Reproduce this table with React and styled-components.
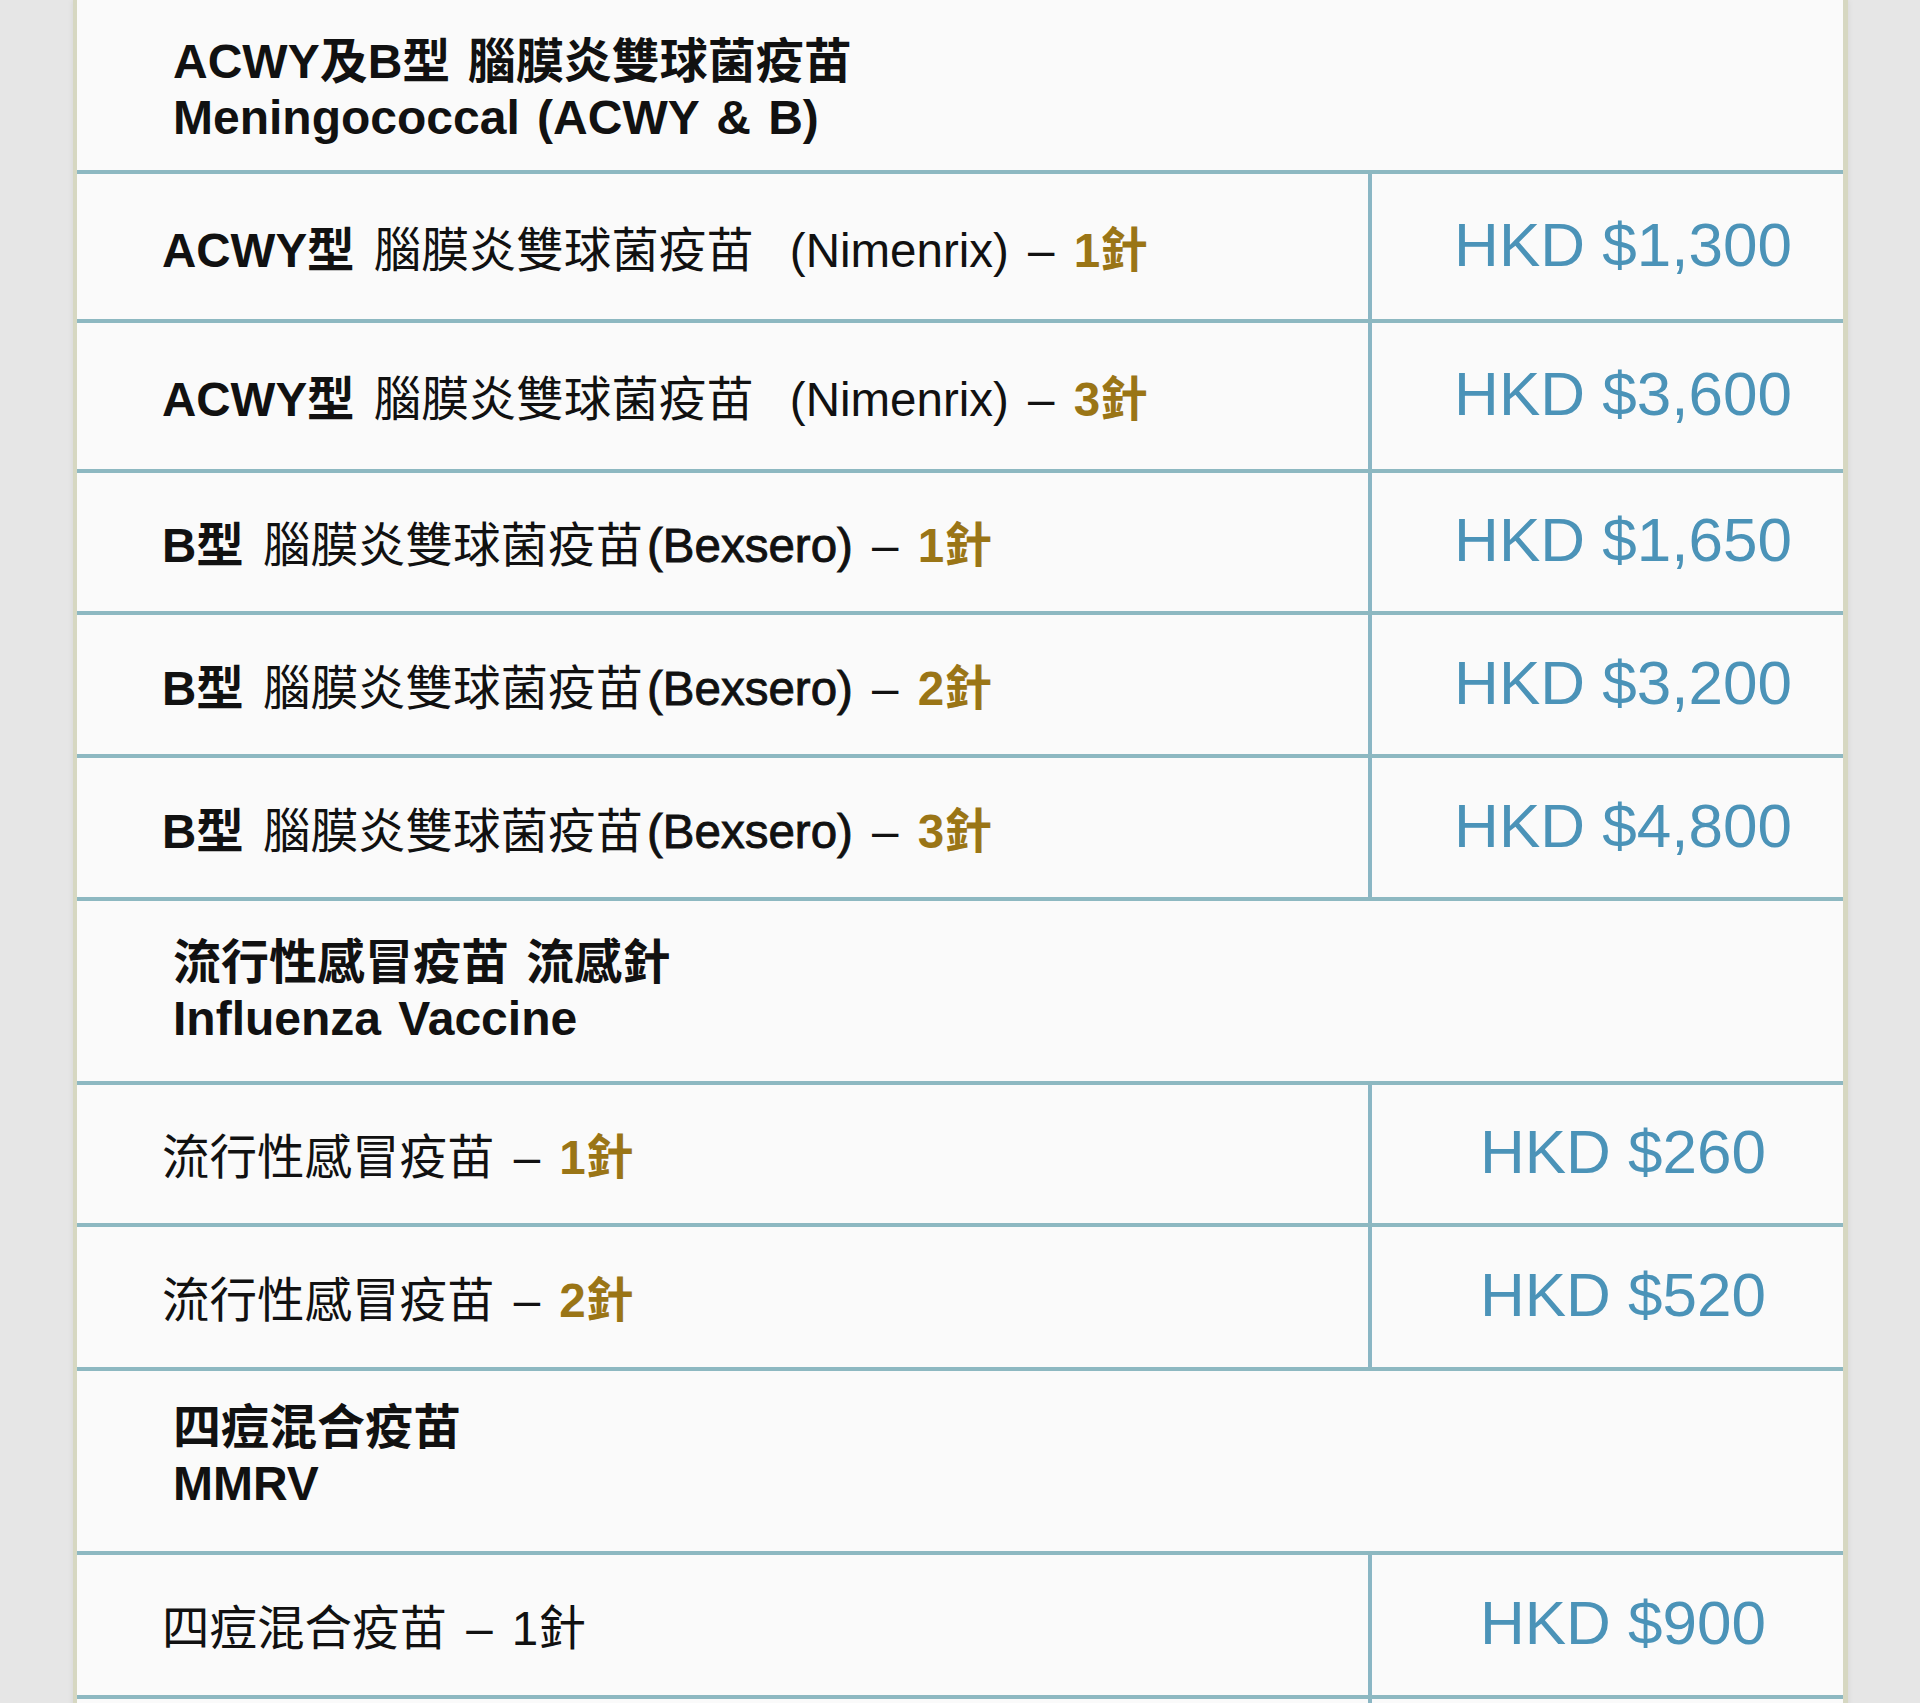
import styled, { createGlobalStyle } from "styled-components";

const GlobalStyle = createGlobalStyle`
  html, body {
    margin: 0;
    padding: 0;
    background: #e6e6e6;
  }
  body {
    font-family: "Liberation Sans", "Noto Sans CJK TC", sans-serif;
    color: #111;
  }
  * {
    box-sizing: border-box;
  }
`;

const sections = [
  {
    zh: "ACWY及B型 腦膜炎雙球菌疫苗",
    en: "Meningococcal (ACWY & B)",
    h: 174,
    pt: 34,
    items: [
      { strong: "ACWY型", text: " 腦膜炎雙球菌疫苗", brand: "(Nimenrix)", gap: 36, dose: "1針", price: "HKD $1,300", h: 149 },
      { strong: "ACWY型", text: " 腦膜炎雙球菌疫苗", brand: "(Nimenrix)", gap: 36, dose: "3針", price: "HKD $3,600", h: 150 },
      { strong: "B型", text: " 腦膜炎雙球菌疫苗", brand: "(Bexsero)", heavy: true, dose: "1針", price: "HKD $1,650", h: 142 },
      { strong: "B型", text: " 腦膜炎雙球菌疫苗", brand: "(Bexsero)", heavy: true, dose: "2針", price: "HKD $3,200", h: 143 },
      { strong: "B型", text: " 腦膜炎雙球菌疫苗", brand: "(Bexsero)", heavy: true, dose: "3針", price: "HKD $4,800", h: 143 },
    ],
  },
  {
    zh: "流行性感冒疫苗 流感針",
    en: "Influenza Vaccine",
    h: 184,
    pt: 34,
    items: [
      { text: "流行性感冒疫苗", dose: "1針", price: "HKD $260", h: 142 },
      { text: "流行性感冒疫苗", dose: "2針", price: "HKD $520", h: 144 },
    ],
  },
  {
    zh: "四痘混合疫苗",
    en: "MMRV",
    h: 184,
    pt: 29,
    items: [{ text: "四痘混合疫苗", dose: "1針", plain: true, price: "HKD $900", h: 144 }],
  },
];

export default function App() {
  return (
    <>
      <GlobalStyle />
      <Page>
        <Card>
          {sections.map((s) => (
            <div key={s.en}>
              <Heading $h={s.h} $pt={s.pt}>
                <div>{s.zh}</div>
                <div>{s.en}</div>
              </Heading>
              {s.items.map((it, i) => (
                <Row key={i} $h={it.h}>
                  <Item>
                    <span>
                      {it.strong && <Strong>{it.strong}</Strong>}
                      {it.text}
                      {it.brand && (
                        <Brand $gap={it.gap} $heavy={it.heavy}>
                          {it.brand}
                        </Brand>
                      )}
                      {" – "}
                      <Dose $plain={it.plain}>{it.dose}</Dose>
                    </span>
                  </Item>
                  <Price>{it.price}</Price>
                </Row>
              ))}
            </div>
          ))}
          <Row $h={140}>
            <Item />
            <Price />
          </Row>
        </Card>
      </Page>
    </>
  );
}

const Page = styled.div`
  padding: 0 72px 0 73px;
`;

const Card = styled.div`
  background: #fafafa;
  border-left: 4px solid #d6d7c1;
  border-right: 5px solid #d6d7c1;
  box-shadow: 0 0 6px rgba(0, 0, 0, 0.08);
`;

const Heading = styled.div`
  height: ${(p) => p.$h}px;
  padding: ${(p) => p.$pt}px 0 0 96px;
  border-bottom: 4px solid #8db8c1;
  font-size: 48px;
  line-height: 56px;
  font-weight: 700;
  word-spacing: 4px;
  color: #111;
`;

const Row = styled.div`
  display: grid;
  grid-template-columns: 1295px 1fr;
  height: ${(p) => p.$h}px;
  border-bottom: 4px solid #8db8c1;
`;

const Item = styled.div`
  display: flex;
  align-items: center;
  padding: 8px 0 0 85px;
  border-right: 4px solid #8ab6c4;
  font-size: 47.5px;
  line-height: 56px;
  word-spacing: 6px;
  white-space: nowrap;
`;

const Strong = styled.span`
  font-weight: 700;
`;

const Brand = styled.span`
  margin-left: ${(p) => p.$gap || 4}px;
  -webkit-text-stroke: ${(p) => (p.$heavy ? "0.9px currentColor" : "0")};
`;

const Dose = styled.span`
  font-weight: ${(p) => (p.$plain ? 400 : 700)};
  color: ${(p) => (p.$plain ? "#111" : "#9a7516")};
`;

const Price = styled.div`
  display: flex;
  align-items: center;
  justify-content: center;
  padding: 0 0 4px 31px;
  font-size: 62px;
  line-height: 1;
  color: #4b93b8;
`;
